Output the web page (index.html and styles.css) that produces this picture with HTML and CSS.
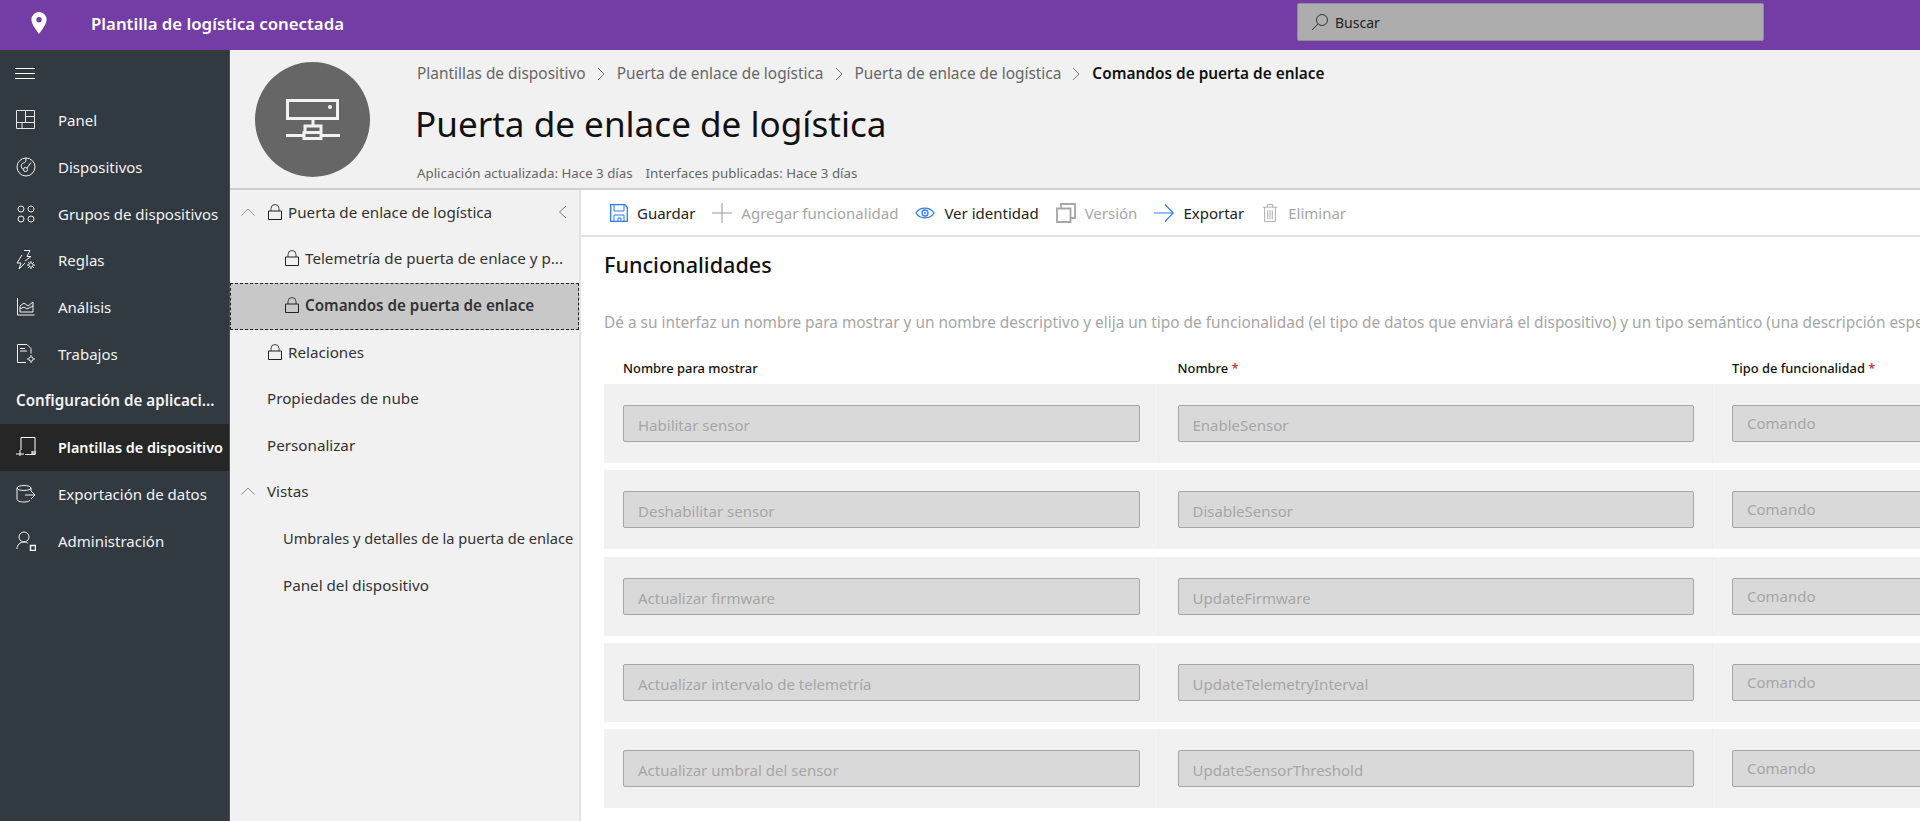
FILE: index.html
```html
<!DOCTYPE html>
<html lang="es">
<head>
  <meta charset="UTF-8" />
  <title>Plantilla de logística conectada</title>
  <link rel="stylesheet" href="styles.css">
</head>
<body>
  <!-- Barra superior -->
  <header class="topbar">
    <svg class="top-logo" viewBox="0 0 16 22"><path fill="#fff" fill-rule="evenodd" d="M8 0a7.6 7.6 0 0 1 7.6 7.6c0 4.4-4.5 10.4-7.6 14.4C4.900 18 .4 12 .4 7.600A7.600 7.600 0 0 1 8 0zm0 5a2.700 2.700 0 1 0 0 5.400A2.700 2.700 0 0 0 8 5z"/></svg>
    <div class="app-name">Plantilla de logística conectada</div>
    <div class="search">
      <svg class="search-icon" viewBox="0 0 18 18"><circle cx="11" cy="7" r="5.500" fill="none" stroke="#333"/><path d="M7 11 1 17" stroke="#333" fill="none"/></svg>
      <span>Buscar</span>
    </div>
  </header>

  <div class="layout">
    <!-- Navegación izquierda -->
    <nav class="sidebar">
      <div class="nav-burger">
        <svg class="nav-icon" viewBox="0 0 20 11"><path d="M0 .5h20M0 5.500h20M0 10.500h20" stroke="#fff" fill="none"/></svg>
      </div>
      <a class="nav-item">
        <svg class="nav-icon" viewBox="0 0 20 20"><path d="M.5.500h18v18H.5zM9.500.500v12M.5 12.500h18M9.500 6.500h9M6 12.500v6" stroke="#e6e6e6" fill="none"/></svg>
        Panel</a>
      <a class="nav-item">
        <svg class="nav-icon" viewBox="0 0 20 20"><g stroke="#f2f2f2" fill="none"><circle cx="10" cy="10" r="9"/><circle cx="9.500" cy="12.500" r="2"/><path d="M11 11 15 5.500M7.500 12.500c-3-1.500-3-6 0-6.500 2-.5 2.500-1.500 2.500-5"/></g></svg>
        Dispositivos</a>
      <a class="nav-item">
        <svg class="nav-icon" viewBox="0 0 20 20"><g stroke="#f2f2f2" fill="none"><circle cx="5" cy="5" r="3"/><circle cx="15" cy="5" r="3"/><circle cx="5" cy="15" r="3"/><circle cx="15" cy="15" r="3"/></g></svg>
        Grupos de dispositivos</a>
      <a class="nav-item">
        <svg class="nav-icon" viewBox="0 0 20 20"><g stroke="#f2f2f2" fill="none"><path d="M8 .5h6l-3 6h4L9 11M6 5 1 13h4l-2 6 6-6"/><circle cx="15" cy="15" r="2.200"/><path d="M15 11v1.500M15 17.500V19M11 15h1.500M17.500 15H19M12.200 12.200l1 1M16.800 16.800l1 1M12.200 17.800l1-1M16.800 13.200l1-1"/></g></svg>
        Reglas</a>
      <a class="nav-item">
        <svg class="nav-icon" viewBox="0 0 20 20"><g stroke="#f2f2f2" fill="none"><path d="M1.500 1v17h17"/><path d="M4 15V9l4-3 4 3 5-4v10zM4 12l4-2 3 2 6-3"/></g></svg>
        Análisis</a>
      <a class="nav-item">
        <svg class="nav-icon" viewBox="0 0 20 20"><g stroke="#f2f2f2" fill="none"><path d="M10 18.500H1.500V.5H11l4 4v5"/><path d="M4 4.500h5M4 7h7"/><circle cx="15" cy="15" r="2.200"/><path d="M15 11v1.500M15 17.500V19M11 15h1.500M17.500 15H19"/></g></svg>
        Trabajos</a>
      <div class="nav-group">Configuración de aplicaci...</div>
      <a class="nav-item active">
        <svg class="nav-icon" viewBox="0 0 20 20"><g stroke="#fff" fill="none"><path d="M5 13V.5h14v17H9"/><path d="M0 17h8M4 13v6"/><path d="M16 14v3.500h3V14" fill="#999"/></g></svg>
        Plantillas de dispositivo</a>
      <a class="nav-item">
        <svg class="nav-icon" viewBox="0 0 20 20"><g stroke="#f2f2f2" fill="none"><ellipse cx="8" cy="4" rx="7" ry="2.500"/><path d="M1 4v11c0 2 3 3 7 3 3 0 5-.5 6-2M15 4v3M9 11h10M15 7l4 4-4 4"/></g></svg>
        Exportación de datos</a>
      <a class="nav-item">
        <svg class="nav-icon" viewBox="0 0 20 20"><g stroke="#f2f2f2" fill="none"><circle cx="8" cy="6" r="5"/><path d="M1 18c0-4 3-7 7-7 2 0 3 .5 4 1.500"/><path d="M14.500 14.500h5v5h-5z" stroke-width="1.500"/></g></svg>
        Administración</a>
    </nav>

    <div class="content">
      <!-- Cabecera de la plantilla -->
      <section class="page-head">
        <div class="avatar">
          <svg viewBox="0 0 54 42" width="54" height="42"><g stroke="#f2f2f2" stroke-width="3" fill="none"><path d="M1.500 1.500h50v18h-50z"/><path d="M27 20v7h-8v6M27 27h8v6M18 33.500h17v6H18zM0 36.500h18M35 36.500h19"/></g><circle cx="44" cy="8" r="2" fill="#f2f2f2"/></svg>
        </div>
        <div class="head-text">
          <div class="crumbs">
            <span>Plantillas de dispositivo</span><svg class="crumb-sep" viewBox="0 0 9 14"><path d="M1 1l6 6-6 6" fill="none" stroke="#777"/></svg>
            <span>Puerta de enlace de logística</span><svg class="crumb-sep" viewBox="0 0 9 14"><path d="M1 1l6 6-6 6" fill="none" stroke="#777"/></svg>
            <span>Puerta de enlace de logística</span><svg class="crumb-sep" viewBox="0 0 9 14"><path d="M1 1l6 6-6 6" fill="none" stroke="#777"/></svg>
            <b>Comandos de puerta de enlace</b>
          </div>
          <h1>Puerta de enlace de logística</h1>
          <div class="meta"><span>Aplicación actualizada: Hace 3 días</span><span>Interfaces publicadas: Hace 3 días</span></div>
        </div>
      </section>

      <div class="split">
        <!-- Árbol de la plantilla -->
        <aside class="tree">
          <div class="tree-row">
            <svg class="chev" viewBox="0 0 14 8"><path d="M.5 7.500 7 1l6.500 6.500" fill="none" stroke="#8a8a8a"/></svg>
            <svg class="lock" viewBox="0 0 14 16"><path d="M3 7V4.500a4 4 0 0 1 8 0V7" fill="none" stroke="#444"/><path d="M.5 7h13v8.500H.5z" fill="none" stroke="#222"/></svg>
            <span>Puerta de enlace de logística</span>
            <svg class="tree-collapse" viewBox="0 0 9 14"><path d="M8 1 1.500 7 8 13" fill="none" stroke="#777"/></svg>
          </div>
          <div class="tree-row lvl2">
            <svg class="lock" viewBox="0 0 14 16"><path d="M3 7V4.500a4 4 0 0 1 8 0V7" fill="none" stroke="#444"/><path d="M.5 7h13v8.500H.5z" fill="none" stroke="#222"/></svg>
            <span>Telemetría de puerta de enlace y p...</span>
          </div>
          <div class="tree-row lvl2 selected">
            <svg class="lock" viewBox="0 0 14 16"><path d="M3 7V4.500a4 4 0 0 1 8 0V7" fill="none" stroke="#444"/><path d="M.5 7h13v8.500H.5z" fill="none" stroke="#222"/></svg>
            <span>Comandos de puerta de enlace</span>
          </div>
          <div class="tree-row lvl1-lock">
            <svg class="lock" viewBox="0 0 14 16"><path d="M3 7V4.500a4 4 0 0 1 8 0V7" fill="none" stroke="#444"/><path d="M.5 7h13v8.500H.5z" fill="none" stroke="#222"/></svg>
            <span>Relaciones</span>
          </div>
          <div class="tree-row lvl1">Propiedades de nube</div>
          <div class="tree-row lvl1">Personalizar</div>
          <div class="tree-row">
            <svg class="chev" viewBox="0 0 14 8"><path d="M.5 7.500 7 1l6.500 6.500" fill="none" stroke="#8a8a8a"/></svg>
            <span class="vistas">Vistas</span>
          </div>
          <div class="tree-row lvl2-plain fit">Umbrales y detalles de la puerta de enlace</div>
          <div class="tree-row lvl2-plain">Panel del dispositivo</div>
        </aside>

        <main class="main">
          <div class="toolbar">
            <div class="tool">
              <svg class="tool-icon" viewBox="0 0 18 18"><g fill="none" stroke="#2b7cf6"><path d="M.7.7h14l2.600 2.600v14H.7z" stroke-width="1.300"/><path d="M4 1v6h10V1M4 17v-6h10v6M8 17v-3h3v3"/></g></svg>
              Guardar</div>
            <div class="tool off">
              <svg class="tool-icon wide" viewBox="0 0 20 20"><path d="M10 0v20M0 10h20" stroke="#999" fill="none"/></svg>
              Agregar funcionalidad</div>
            <div class="tool">
              <svg class="tool-icon wide" viewBox="0 0 20 12"><g fill="none" stroke="#2b7cf6" stroke-width="1.300"><path d="M1 6c4-6.500 14-6.500 18 0-4 6.500-14 6.500-18 0z"/><circle cx="10" cy="6" r="3"/></g><circle cx="10" cy="6" r="1" fill="#2b7cf6"/></svg>
              Ver identidad</div>
            <div class="tool off">
              <svg class="tool-icon wide" viewBox="0 0 20 20"><g fill="none" stroke="#a6a6a6" stroke-width="1.800"><path d="M1 5.500h13.500V19H1z"/><path d="M5 5V1h14v14h-4"/></g></svg>
              Versión</div>
            <div class="tool">
              <svg class="tool-icon wide" viewBox="0 0 20 20"><path d="M0 10h19M11 1.500 19.300 10 11 18.500" fill="none" stroke="#2b7cf6" stroke-width="1.100"/></svg>
              Exportar</div>
            <div class="tool off">
              <svg class="tool-icon" viewBox="0 0 18 20"><g fill="none" stroke="#a6a6a6"><path d="M1 3.500h16M6 3.500v-3h6v3M3 3.500v16h12v-16"/><path d="M6.500 7v10M9 7v10M11.500 7v10"/></g></svg>
              Eliminar</div>
          </div>

          <div class="caps">
            <h2>Funcionalidades</h2>
            <p class="caps-desc">Dé a su interfaz un nombre para mostrar y un nombre descriptivo y elija un tipo de funcionalidad (el tipo de datos que enviará el dispositivo) y un tipo semántico (una descripción específica de los datos que enviará)</p>
            <div class="cap-grid cap-head">
              <div>Nombre para mostrar</div>
              <div>Nombre <i>*</i></div>
              <div>Tipo de funcionalidad <i>*</i></div>
            </div>
            <div class="cap-grid cap-row">
              <div class="cap-cell"><div class="field">Habilitar sensor</div></div>
              <div class="cap-cell"><div class="field">EnableSensor</div></div>
              <div class="cap-cell"><div class="field select">Comando</div></div>
            </div>
            <div class="cap-grid cap-row">
              <div class="cap-cell"><div class="field">Deshabilitar sensor</div></div>
              <div class="cap-cell"><div class="field">DisableSensor</div></div>
              <div class="cap-cell"><div class="field select">Comando</div></div>
            </div>
            <div class="cap-grid cap-row">
              <div class="cap-cell"><div class="field">Actualizar firmware</div></div>
              <div class="cap-cell"><div class="field">UpdateFirmware</div></div>
              <div class="cap-cell"><div class="field select">Comando</div></div>
            </div>
            <div class="cap-grid cap-row">
              <div class="cap-cell"><div class="field">Actualizar intervalo de telemetría</div></div>
              <div class="cap-cell"><div class="field">UpdateTelemetryInterval</div></div>
              <div class="cap-cell"><div class="field select">Comando</div></div>
            </div>
            <div class="cap-grid cap-row">
              <div class="cap-cell"><div class="field">Actualizar umbral del sensor</div></div>
              <div class="cap-cell"><div class="field">UpdateSensorThreshold</div></div>
              <div class="cap-cell"><div class="field select">Comando</div></div>
            </div>
          </div>
        </main>
      </div>
    </div>
  </div>
</body>
</html>
```

FILE: styles.css
```css
* {
  box-sizing: border-box;
}
html, body {
  height: 100%;
}
body {
  margin: 0;
  display: flex;
  flex-direction: column;
  overflow: hidden;
  background: #fff;
  color: #333;
  font-family: "Noto Sans", "Open Sans", sans-serif;
  font-size: 15.2px;
}

/* barra superior */
.topbar {
  flex: none;
  height: 50px;
  display: flex;
  align-items: center;
  padding-left: 31px;
  background: #743ca5;
  color: #fff;
}
.top-logo {
  width: 16px;
  height: 22px;
  margin-bottom: 5px;
}
.app-name {
  width: 1206px;
  margin-left: 44px;
  font-size: 16.8px;
  font-weight: 600;
  margin-bottom: 3px;
}
.search {
  width: 467px;
  height: 38px;
  margin-bottom: 6px;
  display: flex;
  align-items: center;
  gap: 6px;
  padding-left: 13px;
  background: #adadad;
  border: 1px solid #8f8f8f;
  border-radius: 2px;
  color: #222;
  font-size: 14px;
}
.search-icon {
  width: 18px;
  height: 18px;
}

.layout {
  flex: 1;
  display: flex;
  min-height: 0;
}

/* navegacion */
.sidebar {
  flex: none;
  width: 230px;
  background: #323a41;
  color: #f2f2f2;
  border-right: 1px solid #4a4f55;
  font-size: 15px;
}
.nav-burger {
  height: 47px;
  display: flex;
  align-items: center;
  padding-left: 15px;
}
.nav-burger .nav-icon {
  height: 11px;
}
.nav-item {
  height: 46.7px;
  display: flex;
  align-items: center;
  gap: 22px;
  padding-left: 16px;
  white-space: nowrap;
}
.nav-icon {
  flex: none;
  width: 20px;
  height: 20px;
}
.nav-group {
  height: 46.7px;
  display: flex;
  align-items: center;
  padding-left: 16px;
  font-size: 15.2px;
  font-weight: 600;
  white-space: nowrap;
}
.nav-item.active {
  background: #262626;
  color: #fff;
  font-size: 14.4px;
  font-weight: 600;
}

.content {
  flex: 1;
  min-width: 0;
  display: flex;
  flex-direction: column;
}

/* cabecera */
.page-head {
  flex: none;
  height: 140px;
  display: flex;
  padding: 12px 0 0 25px;
  background: #f1f1f1;
  border-bottom: 2px solid #cfcfcf;
}
.avatar {
  flex: none;
  width: 115px;
  height: 115px;
  display: flex;
  align-items: center;
  justify-content: center;
  border-radius: 50%;
  background: #666;
}
.head-text {
  margin-left: 47px;
}
.crumbs {
  display: flex;
  align-items: center;
  gap: 10px;
  margin-top: 1px;
  color: #666;
  font-size: 15.4px;
  white-space: nowrap;
}
.crumbs b {
  color: #111;
  font-weight: 600;
}
.crumb-sep {
  width: 9px;
  height: 14px;
  margin: 0 1px;
}
h1 {
  margin: 16px 0 0 -2px;
  color: #111;
  font-size: 35.1px;
  font-weight: 400;
  line-height: 46px;
  white-space: nowrap;
}
.meta {
  display: flex;
  gap: 13px;
  margin-top: 18px;
  color: #666;
  font-size: 13.3px;
  white-space: nowrap;
}

.split {
  flex: 1;
  display: flex;
  min-height: 0;
}

/* arbol */
.tree {
  flex: none;
  width: 351px;
  background: #f1f1f1;
  border-right: 2px solid #e3e3e3;
}
.tree-row {
  height: 46.6px;
  display: flex;
  align-items: center;
  padding-left: 11px;
  padding-bottom: 3px;
  color: #333;
  white-space: nowrap;
}
.chev {
  flex: none;
  width: 14px;
  height: 8px;
  margin-right: 13px;
}
.lock {
  flex: none;
  width: 14px;
  height: 16px;
  margin-right: 6px;
}
.tree-collapse {
  width: 9px;
  height: 14px;
  margin-left: auto;
  margin-right: 12px;
}
.vistas {
  margin-left: -1px;
}
.lvl2 {
  padding-left: 55px;
}
.lvl1-lock {
  padding-left: 38px;
}
.lvl1 {
  padding-left: 37px;
}
.lvl2-plain {
  padding-left: 53px;
}
.fit {
  font-size: 14.6px;
}
.tree-row.selected {
  background: #c8c8c8;
  border: 1px dashed #222;
  padding-left: 54px;
  font-weight: 600;
}

/* panel principal */
.main {
  flex: 1;
  min-width: 0;
  overflow: hidden;
}
.toolbar {
  height: 47px;
  display: flex;
  align-items: center;
  gap: 17px;
  padding-left: 29px;
  border-bottom: 2px solid #e3e3e3;
  font-size: 15px;
  white-space: nowrap;
}
.tool {
  display: flex;
  align-items: center;
  gap: 9px;
  color: #222;
}
.tool.off {
  color: #a6a6a6;
}
.tool-icon {
  flex: none;
  width: 18px;
  height: 18px;
}
.tool-icon.wide {
  width: 20px;
  height: 20px;
}
.caps {
  padding-left: 23px;
}
h2 {
  margin: 0;
  padding-top: 13px;
  color: #111;
  font-size: 21.6px;
  font-weight: 500;
  line-height: 30px;
}
.caps-desc {
  margin: 33px 0 0;
  color: #a6a6a6;
  font-size: 15.4px;
  line-height: 20px;
  white-space: nowrap;
}
.cap-grid {
  display: grid;
  grid-template-columns: repeat(3, 554.500px);
  width: 1664px;
}
.cap-head {
  height: 51px;
  align-items: center;
  padding-top: 19px;
  color: #111;
  font-size: 12.9px;
  font-weight: 500;
}
.cap-head > div {
  padding-left: 19px;
}
.cap-head i {
  color: #c4262e;
  font-style: normal;
}
.cap-row {
  height: 79px;
  margin-bottom: 7.250px;
  background: #f1f1f1;
}
.cap-cell {
  padding: 21px 18px 0 19px;
  border-right: 1px solid #ededed;
}
.field {
  height: 37px;
  padding: 5px 14px 0;
  background: #d9d9d9;
  border: 1px solid #a6a6a6;
  border-radius: 2px;
  color: #a6a6a6;
  font-size: 15px;
  line-height: 28px;
}
.field.select {
  padding-top: 3px;
}
```
